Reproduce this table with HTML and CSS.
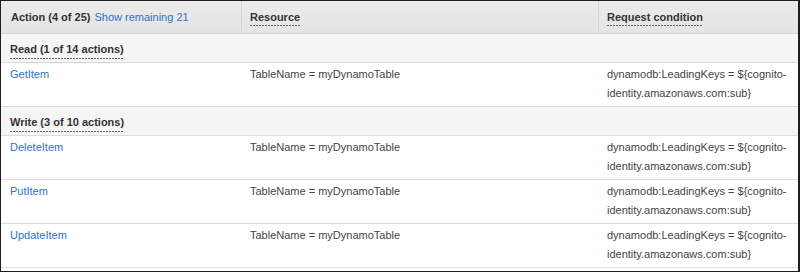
FILE: index.html
```html
<!DOCTYPE html>
<html>
<head>
<meta charset="utf-8">
<link rel="stylesheet" href="styles.css">
</head>
<body>
<div class="frame">
  <div class="row head">
    <div class="cell"><span class="title">Action (4 of 25)</span> <a class="link" href="#">Show remaining 21</a></div>
    <div class="cell sep"><span class="title dash">Resource</span></div>
    <div class="cell sep"><span class="title dash">Request condition</span></div>
  </div>
  <div class="row group">
    <div class="cell"><span class="title dash">Read (1 of 14 actions)</span></div>
    <div class="cell"></div>
    <div class="cell"></div>
  </div>
  <div class="row data">
    <div class="cell"><a class="link" href="#">GetItem</a></div>
    <div class="cell pad">TableName = myDynamoTable</div>
    <div class="cell pad">dynamodb:LeadingKeys = ${cognito-identity.amazonaws.com:sub}</div>
  </div>
  <div class="row group">
    <div class="cell"><span class="title dash">Write (3 of 10 actions)</span></div>
    <div class="cell"></div>
    <div class="cell"></div>
  </div>
  <div class="row data">
    <div class="cell"><a class="link" href="#">DeleteItem</a></div>
    <div class="cell pad">TableName = myDynamoTable</div>
    <div class="cell pad">dynamodb:LeadingKeys = ${cognito-identity.amazonaws.com:sub}</div>
  </div>
  <div class="row data">
    <div class="cell"><a class="link" href="#">PutItem</a></div>
    <div class="cell pad">TableName = myDynamoTable</div>
    <div class="cell pad">dynamodb:LeadingKeys = ${cognito-identity.amazonaws.com:sub}</div>
  </div>
  <div class="row data">
    <div class="cell"><a class="link" href="#">UpdateItem</a></div>
    <div class="cell pad">TableName = myDynamoTable</div>
    <div class="cell pad">dynamodb:LeadingKeys = ${cognito-identity.amazonaws.com:sub}</div>
  </div>
</div>
</body>
</html>
```

FILE: styles.css
```css
* { box-sizing: border-box; }
html, body { margin: 0; padding: 0; background: #ffffff; }
body {
  font-family: "Liberation Sans", Arial, sans-serif;
  font-size: 11px;
  color: #444444;
}
.frame {
  width: 800px;
  height: 272px;
  border-top: 1px solid #1e1e1e;
  border-left: 1px solid #1e1e1e;
  border-right: 2px solid #1e1e1e;
  border-bottom: 1px solid #1e1e1e;
  background: #ffffff;
  overflow: hidden;
}
.row {
  display: grid;
  grid-template-columns: 240px 357px 1fr;
}
.cell {
  padding-left: 9px;
  padding-right: 9px;
}
.head {
  height: 33px;
  background: linear-gradient(#ebebeb, #e4e4e4);
  border-bottom: 1px solid #d4d4d4;
}
.head .cell {
  display: flex;
  align-items: flex-start;
  gap: 4px;
  padding-top: 10px;
  padding-left: 10px;
}
.head .sep {
  border-left: 1px solid #d6d6d6;
  padding-left: 8px;
}
.head .link { line-height: 13px; }
.title {
  font-weight: bold;
  color: #333333;
  line-height: 13px;
}
.dash {
  display: inline-block;
  padding-bottom: 2px;
  background-image: repeating-linear-gradient(to right, #666666 0 2px, transparent 2px 3px);
  background-size: 100% 1px;
  background-repeat: no-repeat;
  background-position: left bottom;
}
.group {
  height: 29px;
  background: #f5f5f5;
  border-bottom: 1px solid #dcdcdc;
}
.group .cell {
  display: flex;
  align-items: center;
}
.group .dash { margin-top: 5px; padding-bottom: 3px; }
.data {
  height: 44px;
  border-bottom: 1px solid #dcdcdc;
}
.data .cell {
  padding-top: 2px;
  line-height: 19px;
}
.link {
  color: #2f72c4;
  text-decoration: none;
}
```
